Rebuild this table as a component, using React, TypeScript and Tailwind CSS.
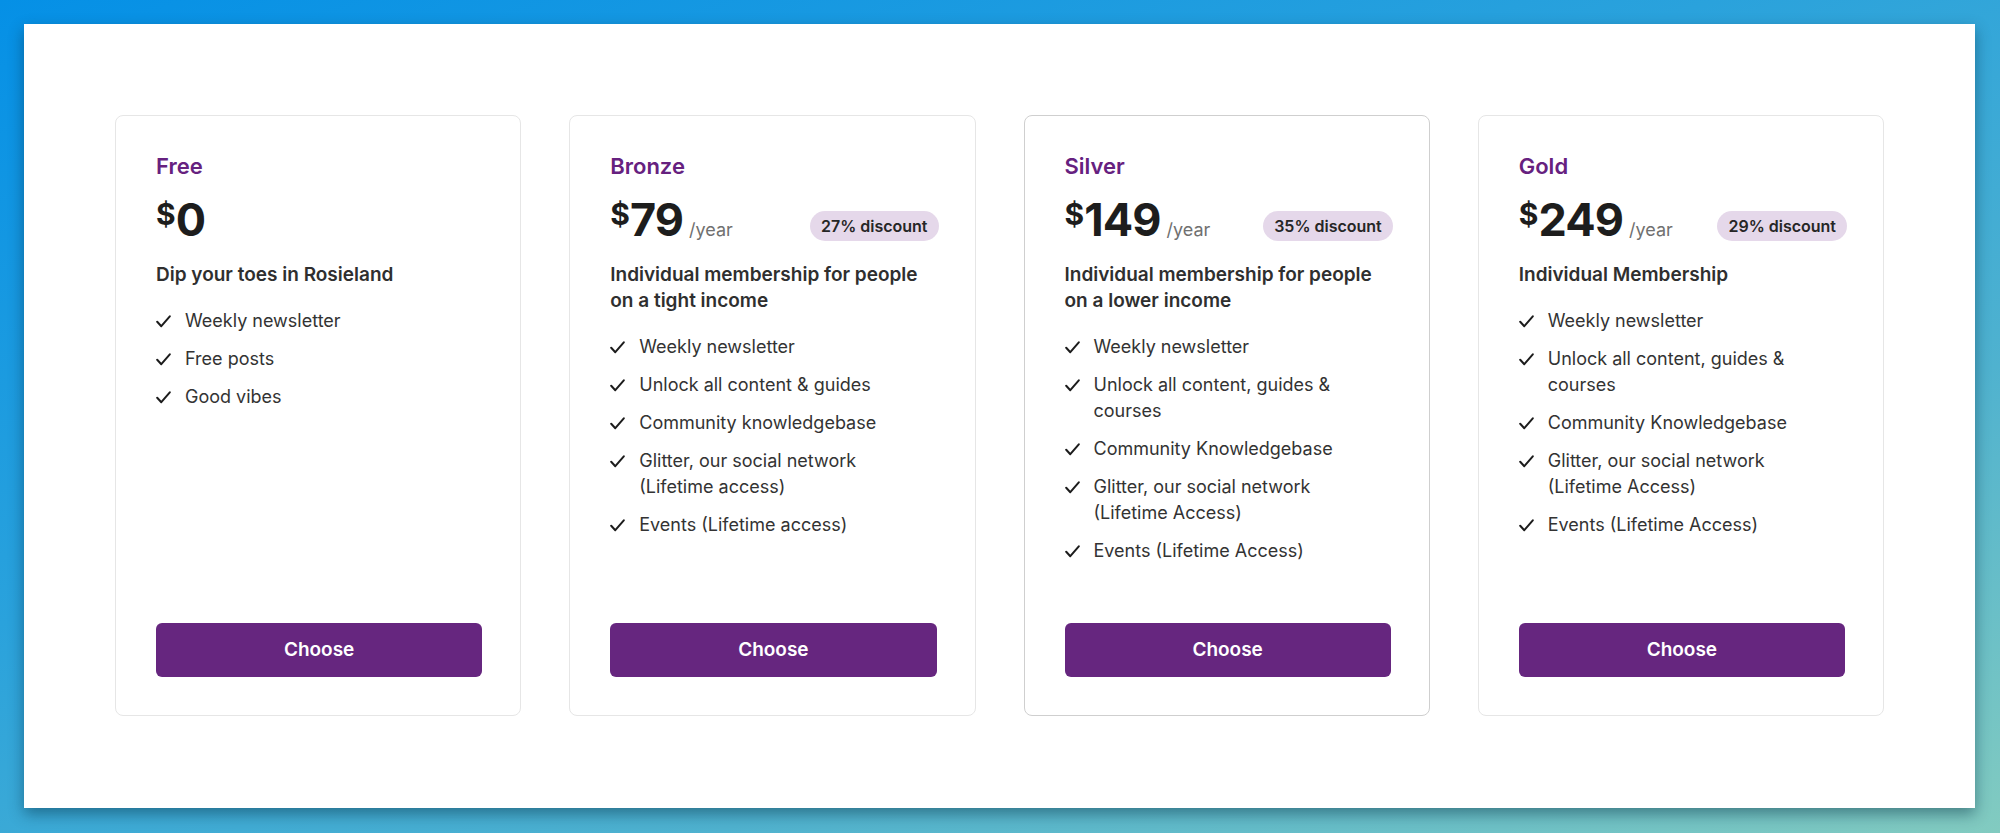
import React from "react";

type Plan = {
  name: string;
  price: string;
  period?: boolean;
  discount?: string;
  description: string;
  features: string[];
  highlighted?: boolean;
};

const plans: Plan[] = [
  {
    name: "Free",
    price: "0",
    description: "Dip your toes in Rosieland",
    features: ["Weekly newsletter", "Free posts", "Good vibes"],
  },
  {
    name: "Bronze",
    price: "79",
    period: true,
    discount: "27% discount",
    description: "Individual membership for people on a tight income",
    features: [
      "Weekly newsletter",
      "Unlock all content & guides",
      "Community knowledgebase",
      "Glitter, our social network (Lifetime access)",
      "Events (Lifetime access)",
    ],
  },
  {
    name: "Silver",
    price: "149",
    period: true,
    discount: "35% discount",
    description: "Individual membership for people on a lower income",
    highlighted: true,
    features: [
      "Weekly newsletter",
      "Unlock all content, guides & courses",
      "Community Knowledgebase",
      "Glitter, our social network (Lifetime Access)",
      "Events (Lifetime Access)",
    ],
  },
  {
    name: "Gold",
    price: "249",
    period: true,
    discount: "29% discount",
    description: "Individual Membership",
    features: [
      "Weekly newsletter",
      "Unlock all content, guides & courses",
      "Community Knowledgebase",
      "Glitter, our social network (Lifetime Access)",
      "Events (Lifetime Access)",
    ],
  },
];

function Check() {
  return (
    <svg width="15" height="13" viewBox="0 0 15 13" fill="none" className="shrink-0">
      <path d="M1.2 6.8 L5.3 11.2 L13.8 1.3" stroke="#1c1c1c" strokeWidth="2" strokeLinecap="round" strokeLinejoin="round" />
    </svg>
  );
}

function Card({ plan }: { plan: Plan }) {
  return (
    <div
      className={
        "flex h-[601px] flex-col rounded-[8px] border bg-white pl-[40px] pr-[38px] pt-[39px] pb-[38px] " +
        (plan.highlighted ? "border-[#cfcfcf]" : "border-[#e6e6e6]")
      }
    >
      <div className="text-[22px] leading-[22px] font-semibold text-[#66217f]">{plan.name}</div>
      <div className="mt-[20px] flex h-[45px] items-end justify-between">
        <div className="flex h-[45px] items-baseline text-[#1d1d1d]">
          <span className="self-start mt-[2px] text-[30px] leading-[30px] font-bold">$</span>
          <span className="text-[45px] leading-[45px] font-bold tracking-[-0.02em]">{plan.price}</span>
          {plan.period && <span className="ml-[6px] text-[18px] leading-none text-[#707070]">/year</span>}
        </div>
        {plan.discount && (
          <div className="mr-[-2px] mb-[1px] flex h-[30px] items-center rounded-full bg-[#e5d8ea] px-[11px] text-[16px] leading-none font-semibold text-[#262626]">
            {plan.discount}
          </div>
        )}
      </div>
      <div className="mt-[20px] pr-[2px] text-[19px] leading-[26px] font-semibold text-[#2f2f2f]">{plan.description}</div>
      <ul className="mt-[20px] flex flex-col gap-[12px] pr-[14px] text-[18px] leading-[26px] text-[#333]">
        {plan.features.map((f) => (
          <li key={f} className="flex">
            <span className="flex h-[26px] w-[29px] shrink-0 items-center">
              <Check />
            </span>
            <span>{f}</span>
          </li>
        ))}
      </ul>
      <button className="mt-auto h-[54px] w-full shrink-0 rounded-[6px] bg-[#66267f] text-[19px] font-semibold text-white">
        Choose
      </button>
    </div>
  );
}

export default function App() {
  return (
    <div
      className="h-[833px] w-full bg-[linear-gradient(160deg,#0590e6_0%,#2aa2dc_40%,#4fb2cf_70%,#82cbc0_100%)] pt-[24px] pl-[24px] pr-[25px]"
      style={{ fontFamily: "Inter, 'Noto Sans', sans-serif" }}
    >
      <div className="h-[784px] bg-white px-[91px] pt-[91px] shadow-[0_6px_14px_rgba(0,40,60,0.45)]">
        <div className="grid grid-cols-4 gap-[48px]">
          {plans.map((p) => (
            <Card key={p.name} plan={p} />
          ))}
        </div>
      </div>
    </div>
  );
}
